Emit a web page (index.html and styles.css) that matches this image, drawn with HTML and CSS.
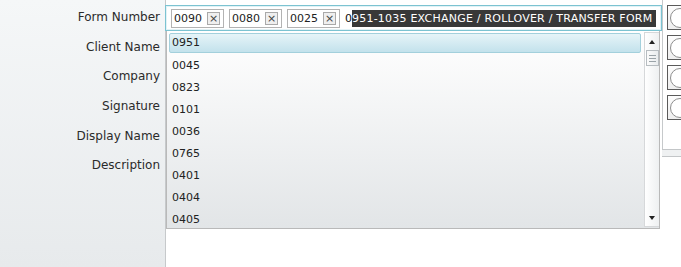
FILE: index.html
```html
<!DOCTYPE html>
<html>
<head>
<meta charset="utf-8">
<link rel="stylesheet" href="styles.css">
</head>
<body>
<div class="page">
  <div class="labels">
    <div class="label">Form Number</div>
    <div class="label">Client Name</div>
    <div class="label">Company</div>
    <div class="label">Signature</div>
    <div class="label">Display Name</div>
    <div class="label">Description</div>
  </div>
  <div class="main">
    <div class="field">
      <span class="tag">0090<span class="x">×</span></span>
      <span class="tag">0080<span class="x">×</span></span>
      <span class="tag">0025<span class="x">×</span></span>
      <span class="typed">0<span class="sel">951-1035 EXCHANGE / ROLLOVER / TRANSFER FORM</span></span>
    </div>
    <div class="dropdown">
      <ul class="items">
        <li class="item active">0951</li>
        <li class="item">0045</li>
        <li class="item">0823</li>
        <li class="item">0101</li>
        <li class="item">0036</li>
        <li class="item">0765</li>
        <li class="item">0401</li>
        <li class="item">0404</li>
        <li class="item">0405</li>
      </ul>
      <div class="scrollbar">
        <span class="arrow up"></span>
        <span class="thumb"><i></i><i></i><i></i></span>
        <span class="spacer"></span>
        <span class="arrow down"></span>
      </div>
    </div>
  </div>
  <div class="side">
    <div class="side-top">
      <div class="opt"><span class="radio"></span></div>
      <div class="opt"><span class="radio"></span></div>
      <div class="opt"><span class="radio"></span></div>
      <div class="opt"><span class="radio"></span></div>
    </div>
    <div class="band"></div>
  </div>
</div>
</body>
</html>
```
FILE: styles.css
```css
html, body {
  margin: 0;
  padding: 0;
  background: #fff;
}
body {
  font-family: "DejaVu Sans", Verdana, sans-serif;
  color: #222;
  width: 681px;
  height: 267px;
  overflow: hidden;
}
.page {
  display: grid;
  grid-template-columns: 166px 496px 19px;
  height: 267px;
}
.labels {
  background: linear-gradient(#f5f7f8, #e7eaec);
  border-right: 1px solid #c6c9cb;
  padding-top: 9px;
  padding-right: 5px;
  display: flex;
  flex-direction: column;
  align-items: flex-end;
}
.label {
  height: 29.7px;
  line-height: 16px;
  font-size: 12px;
  color: #2a2a2a;
}
.main {
  position: relative;
  margin-left: -1px;
  padding-top: 5px;
}
.field {
  height: 24px;
  border: 1px solid #7cc3d1;
  box-shadow: inset 0 0 0 1px #e2f2f6;
  display: flex;
  align-items: center;
  gap: 5px;
  padding-left: 5px;
  font-size: 11px;
  white-space: nowrap;
  overflow: hidden;
  background: #fff;
}
.tag {
  display: inline-flex;
  align-items: center;
  height: 17px;
  border: 1px solid #b3b3b3;
  padding: 0 3px 0 2px;
  gap: 5px;
  color: #222;
}
.x {
  display: inline-flex;
  align-items: center;
  justify-content: center;
  width: 11px;
  height: 11px;
  border: 1px solid #a9a9a9;
  background: #efefef;
  font-size: 11px;
  line-height: 1;
  color: #444;
}
.typed {
  color: #111;
}
.sel {
  background: #383838;
  color: #fff;
  padding: 2px 4px 2px 0;
  letter-spacing: 0.22px;
}
.dropdown {
  position: absolute;
  left: 1px;
  top: 31px;
  width: 494px;
  height: 198px;
  box-sizing: border-box;
  border: 1px solid #b9b9b9;
  border-top: none;
  background: linear-gradient(#ffffff, #e2e5e7);
  display: flex;
  overflow: hidden;
}
.items {
  list-style: none;
  margin: 0;
  padding: 2px 0 0 2px;
  flex: 1;
}
.item {
  height: 22px;
  line-height: 22px;
  font-size: 11px;
  padding-left: 3px;
  color: #222;
  box-sizing: border-box;
}
.item.active {
  height: 20px;
  line-height: 18px;
  margin: 0 0 2px 0;
  padding-left: 2px;
  border: 1px solid #a3d0dc;
  border-radius: 2px;
  background: linear-gradient(#e6f4f8, #c3e2ec);
}
.scrollbar {
  width: 15px;
  margin: 1px 0 1px 3px;
  border: 1px solid #d6d8da;
  border-right: none;
  background: linear-gradient(90deg, #ffffff, #eef0f1);
  display: flex;
  flex-direction: column;
  align-items: center;
  padding: 7px 0 6px 0;
  box-sizing: border-box;
}
.arrow {
  width: 0;
  height: 0;
  border-left: 3px solid transparent;
  border-right: 3px solid transparent;
}
.arrow.up {
  border-bottom: 4px solid #222;
}
.arrow.down {
  border-top: 4px solid #222;
}
.spacer {
  flex: 1;
}
.thumb {
  margin-top: 6px;
  width: 11px;
  height: 14px;
  border: 1px solid #b6bcc0;
  background: linear-gradient(90deg, #fbfbfb, #e9ecee);
  display: flex;
  flex-direction: column;
  justify-content: center;
  align-items: center;
  gap: 2px;
}
.thumb i {
  display: block;
  width: 7px;
  height: 1px;
  background: #9aa3a8;
}
.side {
  display: flex;
  flex-direction: column;
}
.side-top {
  height: 149px;
  border-left: 1px solid #c6c9cb;
  padding: 5px 0 0 4px;
  box-sizing: border-box;
  display: flex;
  flex-direction: column;
  gap: 5px;
}
.opt {
  height: 25px;
  box-sizing: border-box;
  border: 1px solid #5a5a5a;
  border-right: none;
  background: linear-gradient(#fdfdfd, #eeeeee);
  padding: 2px 0 0 2px;
  overflow: hidden;
}
.radio {
  display: block;
  width: 18px;
  height: 18px;
  border: 1px solid #8e8e8e;
  border-radius: 50%;
  background: #fff;
}
.band {
  height: 6px;
  border-top: 1px solid #c3c6c8;
  border-bottom: 1px solid #c3c6c8;
  background: #eff1f2;
}
```
